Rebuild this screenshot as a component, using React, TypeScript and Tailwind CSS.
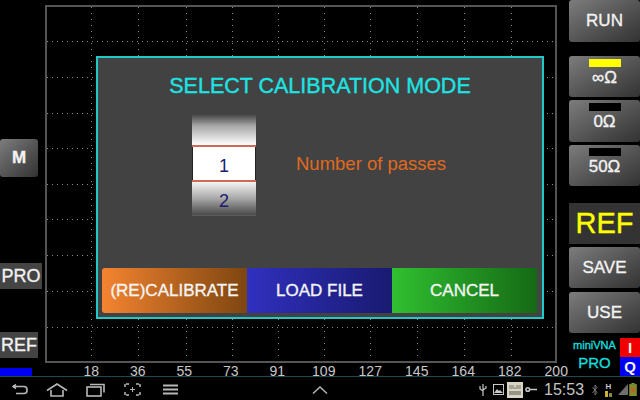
import React from 'react';

const gridX = [44, 91, 139, 185, 231, 277, 323, 370, 417, 464];
const gridY = [34, 70, 106, 141, 177, 212, 248, 284, 320];
const ticks = ['18', '36', '55', '73', '91', '109', '127', '145', '164', '182', '200'];

const medium = '[-webkit-text-stroke:0.35px_currentColor]';
const btn =
  'flex items-center justify-center rounded-[3px] bg-gradient-to-br from-[#7d7d7d] to-[#333333] text-[#f2f2f2] [-webkit-text-stroke:0.35px_currentColor]';

const PlotGrid = () => (
  <svg className="block" width="508" height="354" viewBox="0 0 508 354">
    {gridX.map((x) => (
      <line key={x} x1={x + 0.5} y1="0" x2={x + 0.5} y2="354" stroke="#8a8a8a" strokeWidth="1" strokeDasharray="1 5" />
    ))}
    {gridY.map((y) => (
      <line key={y} x1="0" y1={y + 0.5} x2="508" y2={y + 0.5} stroke="#8a8a8a" strokeWidth="1" strokeDasharray="1 4" />
    ))}
  </svg>
);

const CalButton = ({ label, bar, h }: { label: string; bar: string; h: string }) => (
  <div className={`${btn} ${h} w-[71px] flex-col justify-start text-[17px] leading-[18px]`}>
    <div className={`mt-[3px] h-[8px] w-[32px] shrink-0 ${bar}`} />
    <span className="mt-[2px]">{label}</span>
  </div>
);

const NavIcons = () => (
  <>
    <svg className="ml-[12px]" width="16" height="12" viewBox="0 0 16 12" fill="none" stroke="#b8b8b8" strokeWidth="1.6">
      <path d="M1 2.5h11a3 3 0 0 1 3 3v1a3 3 0 0 1-3 3H4" />
      <path d="M4 0.5 1 2.5 4 4.5" />
    </svg>
    <svg className="ml-[18px]" width="22" height="14" viewBox="0 0 22 14" fill="none" stroke="#b8b8b8" strokeWidth="1.6">
      <path d="M1 7.5 11 1l10 6.5" />
      <path d="M5 7v6h12V7" />
    </svg>
    <svg className="ml-[18px]" width="19" height="14" viewBox="0 0 19 14" fill="none" stroke="#b8b8b8" strokeWidth="1.6">
      <rect x="1" y="4" width="14" height="9" />
      <path d="M4 1.5h14v8" />
    </svg>
    <svg className="ml-[19px]" width="17" height="13" viewBox="0 0 17 13" fill="none" stroke="#b8b8b8" strokeWidth="1.5">
      <path d="M5 1H1v4M12 1h4v4M5 12H1V8M12 12h4V8" strokeDasharray="3 1" />
      <path d="M8.5 4v5M6 6.5h5" strokeWidth="1" />
    </svg>
    <svg className="ml-[22px]" width="15" height="11" viewBox="0 0 15 11" stroke="#b8b8b8" strokeWidth="2">
      <path d="M0 1.5h15M0 5.5h15M0 9.5h15" />
    </svg>
    <svg className="ml-[134px]" width="16" height="8" viewBox="0 0 16 8" fill="none" stroke="#b8b8b8" strokeWidth="1.4">
      <path d="M1 7.5 8 1l7 6.5" />
    </svg>
  </>
);

const StatusIcons = () => (
  <div className="ml-auto flex items-center">
    <svg width="8" height="14" viewBox="0 0 8 14" fill="none" stroke="#c8c8c8" strokeWidth="1.2">
      <path d="M4 1v12M1 3v3l3 2M7 3v2L4 7" />
    </svg>
    <svg className="ml-[6px]" width="11" height="11" viewBox="0 0 11 11">
      <rect x="0.5" y="0.5" width="10" height="10" fill="none" stroke="#c8c8c8" />
      <path d="M1 9 4 5l2 2 1-1 3 3z" fill="#c8c8c8" />
    </svg>
    <svg className="ml-[3px]" width="16" height="16" viewBox="0 0 16 16">
      <rect width="16" height="16" fill="#d9d5c4" />
      <path d="M2 4h5M9 4h5M2 6h12" stroke="#77746a" strokeWidth="1" />
      <path d="M2 10h12M2 12h12" stroke="#55534b" strokeWidth="1" />
    </svg>
    <svg className="ml-[2px]" width="12" height="7" viewBox="0 0 13 7" fill="none" stroke="#c8c8c8">
      <circle cx="3" cy="3.5" r="2" strokeWidth="1.6" />
      <path d="M5 3.5h8" strokeWidth="1.6" />
    </svg>
    <span className="ml-[7px] w-[38px] text-[16px] leading-none text-[#c4c4c4]">15:53</span>
    <svg className="ml-[10px]" width="6" height="12" viewBox="0 0 6 12" fill="none" stroke="#777" strokeWidth="1">
      <path d="M0.5 3 5 8.5 3 11V1l2 2.5L0.5 9" />
    </svg>
    <div className="ml-[7px] flex w-[7px] flex-col items-center">
      <span className="text-[8px] font-bold leading-[8px] text-[#c8c8c8]">H</span>
      <svg width="7" height="6" viewBox="0 0 7 6">
        <path d="M0 0h3v6H0z" fill="#c6b23a" />
        <path d="M4 2h3v4H4z" fill="#8a8a3a" />
      </svg>
    </div>
    <svg className="ml-[6px]" width="10" height="11" viewBox="0 0 10 11">
      <path d="M0 11 10 0v11z" fill="#6f6f6f" />
    </svg>
    <svg className="ml-[1px] mr-[3px]" width="8" height="13" viewBox="0 0 7 12">
      <rect x="2" y="0" width="3" height="1" fill="#8a9a3a" />
      <rect x="0" y="1" width="7" height="11" fill="#7c8f2e" />
      <path d="M1.5 4 5.5 9M5.5 4 1.5 9" stroke="#c85a28" strokeWidth="1.2" />
    </svg>
  </div>
);

export default function App() {
  return (
    <div className="flex h-[400px] w-[640px] flex-col overflow-hidden bg-black font-['Liberation_Sans',sans-serif]">
      <div className="flex h-[376px]">
        {/* Left column */}
        <div className="flex w-[45px] flex-col items-start">
          <div className={`${btn} mt-[139px] h-[38px] w-[38px] text-[17px] font-bold`}>M</div>
          <div className={`mt-[86px] flex h-[26px] w-[42px] items-center justify-center bg-[#444444] text-[18px] text-[#f2f2f2] ${medium}`}>
            PRO
          </div>
          <div className={`mt-[43px] flex h-[26px] w-[38px] items-center justify-center bg-[#444444] text-[18px] text-[#f2f2f2] ${medium}`}>
            REF
          </div>
          <div className="mt-[10px] h-[8px] w-[32px] bg-[#0000f0]" />
        </div>

        {/* Plot and axis */}
        <div className="flex w-[524px] flex-col">
          <div className="relative mt-[5px] h-[358px] w-[512px] border-2 border-[#555555]">
            <PlotGrid />
            {/* Calibration dialog */}
            <div className="absolute left-[49px] top-[49px] flex h-[263px] w-[448px] flex-col items-center border-2 border-[#20c8c8] bg-[#424242]">
              <div className={`mt-[14px] text-[21.5px] leading-[28px] text-[#1de4e4] ${medium}`}>SELECT CALIBRATION MODE</div>
              <div className="mt-[13px] flex w-full items-center">
                <div className="ml-[94px] flex h-[103px] w-[64px] flex-col text-center text-[18px] text-[#1b1b70]">
                  <div className="h-[32px] bg-gradient-to-b from-[#3a3a3a] via-[#a8a8a8] via-40% to-white" />
                  <div className="h-[2px] bg-[#cf6a58]" />
                  <div className="flex h-[33px] items-center justify-center border-x border-[#222222] bg-white pt-[6px]">
                    1
                  </div>
                  <div className="h-[2px] bg-[#cf6a58]" />
                  <div className="flex h-[34px] items-center justify-center border-b border-[#5a5a5a] bg-gradient-to-b from-[#f4f4f4] via-[#a8a8a8] to-[#4a4a4a] pt-[6px]">
                    2
                  </div>
                </div>
                <div className="mb-[1px] ml-[40px] text-[18.5px] text-[#e06a20]">Number of passes</div>
              </div>
              <div className={`ml-[-1px] mt-[52px] flex h-[45px] text-[17px] text-[#f4f4f4] ${medium}`}>
                <div className="flex w-[145px] items-center justify-center rounded-l-[3px] bg-gradient-to-r from-[#f58430] to-[#7e4610]">
                  (RE)CALIBRATE
                </div>
                <div className="flex w-[145px] items-center justify-center bg-gradient-to-r from-[#3030c0] to-[#191a70]">
                  LOAD FILE
                </div>
                <div className="flex w-[145px] items-center justify-center bg-gradient-to-r from-[#30c030] to-[#156a15]">
                  CANCEL
                </div>
              </div>
            </div>
          </div>
          <div className="ml-[23px] flex text-center text-[14px] leading-[16px] text-[#c8c8c8]">
            {ticks.map((t) => (
              <span key={t} className="w-[46.5px] shrink-0">
                {t}
              </span>
            ))}
          </div>
        </div>

        {/* Right column */}
        <div className="flex w-[71px] flex-col">
          <div className={`${btn} h-[42px] text-[17px]`}>RUN</div>
          <div className="mt-[14px] flex flex-col gap-[3px]">
            <CalButton label="∞Ω" bar="bg-[#ffff00]" h="h-[41px]" />
            <CalButton label="0Ω" bar="bg-black" h="h-[42px]" />
            <CalButton label="50Ω" bar="bg-black" h="h-[41px]" />
          </div>
          <div className={`mt-[17px] flex h-[41px] items-center justify-center bg-[#333333] text-[29px] text-[#ffff00] ${medium}`}>
            REF
          </div>
          <div className={`${btn} mt-[3px] h-[41px] text-[17px]`}>SAVE</div>
          <div className={`${btn} mt-[4px] h-[41px] text-[17px]`}>USE</div>
          <div className="mt-[5px] flex">
            <div className="flex w-[51px] flex-col items-center pt-[1px] text-[#14dcdc]">
              <span className={`text-[11px] leading-[13px] ${medium}`}>miniVNA</span>
              <span className={`mt-[3px] text-[15px] leading-[16px] ${medium}`}>PRO</span>
            </div>
            <div className="flex w-[20px] flex-col text-center text-[15px] font-bold leading-[19px] text-[#f2f2f2]">
              <span className="h-[19px] bg-[#f00000]">I</span>
              <span className="h-[19px] bg-[#0000f0]">Q</span>
            </div>
          </div>
        </div>
      </div>

      {/* System bar */}
      <div className="flex h-[24px] items-center border-t border-[#1c4a50] pt-[2px]">
        <NavIcons />
        <StatusIcons />
      </div>
    </div>
  );
}
